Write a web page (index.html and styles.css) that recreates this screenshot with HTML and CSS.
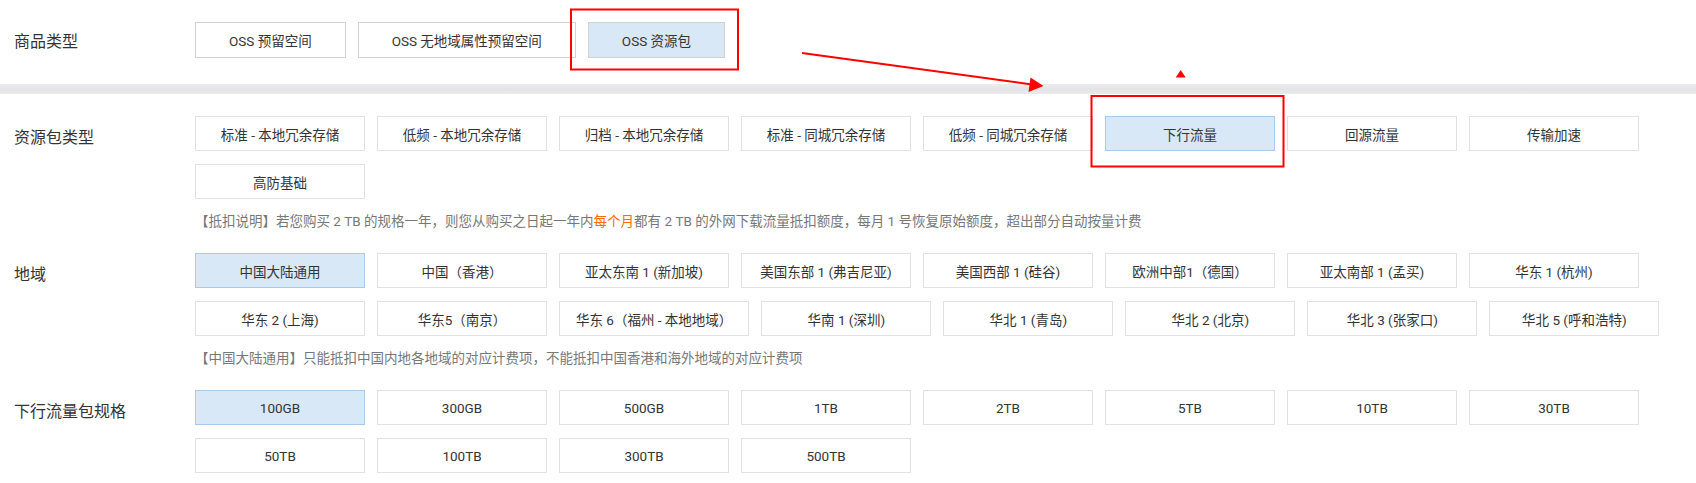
FILE: index.html
```html
<!DOCTYPE html>
<html lang="zh-CN">
<head>
  <meta charset="UTF-8" />
  <title>OSS 资源包</title>
  <link rel="stylesheet" href="styles.css">
</head>
<body>
  <div class="page">
    <!-- 商品类型 -->
    <div class="field field-top">
      <div class="field-label">商品类型</div>
      <div class="field-body">
        <div class="options">
          <span class="opt">OSS 预留空间</span>
          <span class="opt">OSS 无地域属性预留空间</span>
          <span class="opt selected">OSS 资源包</span>
        </div>
      </div>
    </div>

    <div class="divider"></div>

    <!-- 资源包类型 -->
    <div class="field">
      <div class="field-label">资源包类型</div>
      <div class="field-body">
        <div class="options">
          <span class="opt">标准 - 本地冗余存储</span>
          <span class="opt">低频 - 本地冗余存储</span>
          <span class="opt">归档 - 本地冗余存储</span>
          <span class="opt">标准 - 同城冗余存储</span>
          <span class="opt">低频 - 同城冗余存储</span>
          <span class="opt selected">下行流量</span>
          <span class="opt">回源流量</span>
          <span class="opt">传输加速</span>
          <span class="opt">高防基础</span>
        </div>
        <p class="note">【抵扣说明】若您购买 2 TB 的规格一年，则您从购买之日起一年内<em>每个月</em>都有 2 TB 的外网下载流量抵扣额度，每月 1 号恢复原始额度，超出部分自动按量计费</p>
      </div>
    </div>

    <!-- 地域 -->
    <div class="field">
      <div class="field-label">地域</div>
      <div class="field-body">
        <div class="options">
          <span class="opt selected">中国大陆通用</span>
          <span class="opt">中国（香港）</span>
          <span class="opt">亚太东南 1 (新加坡)</span>
          <span class="opt">美国东部 1 (弗吉尼亚)</span>
          <span class="opt">美国西部 1 (硅谷)</span>
          <span class="opt">欧洲中部1（德国）</span>
          <span class="opt">亚太南部 1 (孟买)</span>
          <span class="opt">华东 1 (杭州)</span>
          <span class="opt">华东 2 (上海)</span>
          <span class="opt">华东5（南京）</span>
          <span class="opt">华东 6（福州 - 本地地域）</span>
          <span class="opt">华南 1 (深圳)</span>
          <span class="opt">华北 1 (青岛)</span>
          <span class="opt">华北 2 (北京)</span>
          <span class="opt">华北 3 (张家口)</span>
          <span class="opt">华北 5 (呼和浩特)</span>
        </div>
        <p class="note">【中国大陆通用】只能抵扣中国内地各地域的对应计费项，不能抵扣中国香港和海外地域的对应计费项</p>
      </div>
    </div>

    <!-- 下行流量包规格 -->
    <div class="field">
      <div class="field-label">下行流量包规格</div>
      <div class="field-body">
        <div class="options">
          <span class="opt selected">100GB</span>
          <span class="opt">300GB</span>
          <span class="opt">500GB</span>
          <span class="opt">1TB</span>
          <span class="opt">2TB</span>
          <span class="opt">5TB</span>
          <span class="opt">10TB</span>
          <span class="opt">30TB</span>
          <span class="opt">50TB</span>
          <span class="opt">100TB</span>
          <span class="opt">300TB</span>
          <span class="opt">500TB</span>
        </div>
      </div>
    </div>
  </div>

  <!-- red annotations drawn over the form -->
  <svg class="annot" width="1696" height="483" viewBox="0 0 1696 483">
    <rect x="571" y="9.5" width="167" height="60" fill="none" stroke="#f00" stroke-width="2"/>
    <rect x="1091.5" y="96" width="192" height="70.5" fill="none" stroke="#f00" stroke-width="2"/>
    <line x1="802" y1="53" x2="1032" y2="84.5" stroke="#f00" stroke-width="2"/>
    <polygon points="1043.5,86 1030.5,77.5 1028.5,92" fill="#f00"/>
    <polygon points="1180.7,70 1185.7,77.5 1175.7,77.5" fill="#f00"/>
  </svg>
</body>
</html>
```

FILE: styles.css
```css
body {
  margin: 0;
  background: #fff;
  font-family: Roboto, "Noto Sans CJK SC", sans-serif;
  color: #333;
}

.page {
  padding-top: 22px;
}

.field {
  display: flex;
  margin-bottom: 21px;
}

.field-label {
  flex-shrink: 0;
  width: 181px;
  padding-left: 14px;
  padding-top: 4px;
  font-size: 16px;
  line-height: 35px;
  color: #333;
}

.field-body {
  flex: 1;
}

.options {
  display: flex;
  flex-wrap: wrap;
  gap: 13px 12px;
}

.opt {
  box-sizing: border-box;
  min-width: 170px;
  height: 35px;
  padding: 0 16px;
  border: 1px solid #e1e1e1;
  background: #fff;
  display: flex;
  align-items: center;
  justify-content: center;
  font-size: 13.5px;
  color: #333;
  white-space: nowrap;
}

.opt.selected {
  background: #d9e8f6;
  border-color: #a9cbea;
}

/* top row: buttons sized by their text */
.field-top {
  margin-bottom: 24px;
}

.field-top .field-label {
  line-height: 36px;
  padding-top: 2px;
}

.field-top .opt {
  min-width: 0;
  height: 36px;
  padding: 0 33px;
  border-color: #d2d2d2;
}

.divider {
  height: 10px;
  margin-bottom: 22px;
  background: linear-gradient(#ececee, #e4e4e6 50%, #eaeaec);
}

.note {
  margin: 11px 0 0;
  font-size: 13.5px;
  line-height: 22px;
  color: #777;
}

.note em {
  font-style: normal;
  color: #ff6a00;
}

.annot {
  position: absolute;
  top: 0;
  left: 0;
  pointer-events: none;
}
```
